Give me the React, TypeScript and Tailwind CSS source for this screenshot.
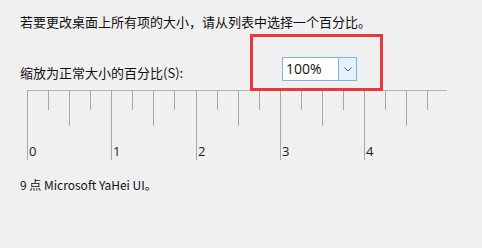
import React from "react";

const ticks = Array.from({ length: 20 }, (_, i) => i);

function Ruler() {
  return (
    <svg width="440" height="70" className="block">
      <line x1="7" y1="0.5" x2="427" y2="0.5" stroke="#b4b4b4" strokeWidth="1" />
      {ticks.map((i) => {
        const x = Math.round(7 + i * 21.07) + 0.5;
        const len = i % 4 === 0 ? 70 : i % 2 === 0 ? 36 : 20;
        return <line key={i} x1={x} y1="0" x2={x} y2={len} stroke="#a8a8a8" strokeWidth="1" />;
      })}
      {[0, 1, 2, 3, 4].map((n) => (
        <text
          key={n}
          x={Math.round(7 + n * 84.3) + 2}
          y="66"
          fontSize="13"
          fill="#1a1a1a"
          fontFamily="'Open Sans', 'Noto Sans', sans-serif"
        >
          {n}
        </text>
      ))}
    </svg>
  );
}

export default function App() {
  return (
    <div
      className="relative w-[482px] h-[248px] bg-[#f0f0f0] overflow-hidden pl-[20px] pt-[13px] text-[#111]"
      style={{ fontFamily: "'Noto Sans CJK SC', 'Noto Sans', sans-serif" }}
    >
      <p className="text-[13px] leading-[18px]">若要更改桌面上所有项的大小，请从列表中选择一个百分比。</p>

      <div className="mt-[26px] flex items-end">
        <span className="text-[13px] leading-[18px] w-[262px]">缩放为正常大小的百分比(S):</span>
        <div className="mb-[1px] flex h-[24px] w-[75px] border border-[#7eb4ea] bg-white">
          <span className="flex-1 pl-[3px] text-[14px] leading-[22px] font-['Open_Sans',sans-serif]">100%</span>
          <span className="flex w-[18px] items-center justify-center border-l border-[#7eb4ea] bg-[#e5f1fb]">
            <svg width="8" height="5" viewBox="0 0 8 5">
              <path d="M0.5 0.5 L4 4 L7.5 0.5" fill="none" stroke="#555" strokeWidth="1" />
            </svg>
          </span>
        </div>
      </div>

      <div className="mt-[8px]">
        <Ruler />
      </div>

      <p className="mt-[17px] text-[12px] leading-[16px]">9 点 Microsoft YaHei UI。</p>

      <div className="pointer-events-none absolute left-[250px] top-[34px] h-[57px] w-[133px] border-[3px] border-[#e8383d]" />
    </div>
  );
}
